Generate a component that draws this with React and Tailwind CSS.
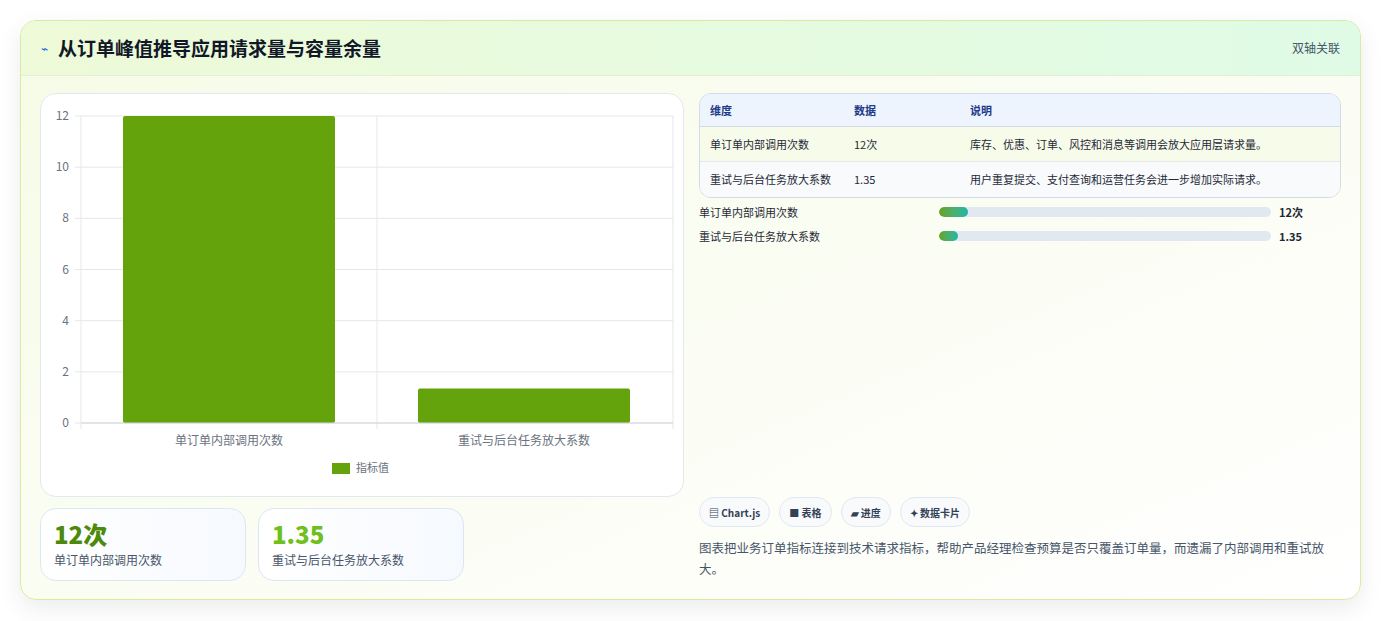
const F = { fontFamily: '"Noto Sans CJK SC", "Noto Sans", sans-serif' }

function Chart() {
  const top = 115, bottom = 422, left = 80, right = 672
  const y = v => bottom - (v / 12) * (bottom - top)
  return (
    <svg width="643" height="403" viewBox="40 93 643 403" className="block">
      {[0, 2, 4, 6, 8, 10, 12].map(v => (
        <g key={v}>
          <line x1={left - 6} x2={right} y1={y(v)} y2={y(v)} stroke="#e5e7eb" />
          <text x={68} y={y(v) + 4} textAnchor="end" fontSize="12" fill="#6b7280" style={F}>{v}</text>
        </g>
      ))}
      <line x1={left} x2={left} y1={top} y2={bottom + 6} stroke="#e5e7eb" />
      <line x1={376} x2={376} y1={top} y2={bottom + 6} stroke="#e5e7eb" />
      <line x1={672} x2={672} y1={top} y2={bottom + 6} stroke="#e5e7eb" />
      <rect x={122} y={y(12)} width={212} height={bottom - y(12)} rx="2" fill="#65a30d" />
      <rect x={417} y={y(1.35)} width={212} height={bottom - y(1.35)} rx="2" fill="#65a30d" />
      <line x1={left} x2={right} y1={bottom} y2={bottom} stroke="#d1d5db" />
      <text x={228} y={444} textAnchor="middle" fontSize="12" fill="#6b7280" style={F}>单订单内部调用次数</text>
      <text x={523} y={444} textAnchor="middle" fontSize="12" fill="#6b7280" style={F}>重试与后台任务放大系数</text>
      <rect x={331} y={462} width={18} height={11} fill="#65a30d" />
      <text x={355} y={471} fontSize="11" fill="#6b7280" style={F}>指标值</text>
    </svg>
  )
}

export default function App() {
  const rows = [
    ['单订单内部调用次数', '12次', '库存、优惠、订单、风控和消息等调用会放大应用层请求量。', 'bg-[#f7fbea]'],
    ['重试与后台任务放大系数', '1.35', '用户重复提交、支付查询和运营任务会进一步增加实际请求。', 'bg-[#f8fafc]'],
  ]
  const bars = [['单订单内部调用次数', '12次', 'w-[29px]'], ['重试与后台任务放大系数', '1.35', 'w-[19px]']]
  return (
    <div className="w-[1381px] h-[621px] bg-white pt-[20px] pl-[20px]" style={F}>
      <div className="w-[1341px] h-[580px] rounded-2xl border border-[#d6eda0] shadow-[0_8px_24px_rgba(0,0,0,0.08)] bg-gradient-to-br from-[#f6fbe6] to-white overflow-hidden">
        <div className="h-[55px] flex items-center justify-between px-[20px] bg-gradient-to-r from-[#eefad8] to-[#dffbe6] border-b border-[#e5efd6]">
          <div className="flex items-center gap-[10px]">
            <span className="text-[#2563eb] text-[12px]">⌁</span>
            <span className="text-[19px] font-bold text-[#111827]">从订单峰值推导应用请求量与容量余量</span>
          </div>
          <span className="text-[12px] text-[#475569]">双轴关联</span>
        </div>
        <div className="flex gap-[15px] px-[19px] pt-[17px]">
          <div className="w-[644px]">
            <div className="h-[404px] rounded-2xl border border-[#e2e8f0] bg-white overflow-hidden"><Chart /></div>
            <div className="flex gap-[12px] mt-[11px]">
              {[['12次', '单订单内部调用次数', 'text-[#4d8a0c]'], ['1.35', '重试与后台任务放大系数', 'text-[#6fc01a]']].map(([v, l, c]) => (
                <div key={l} className="w-[206px] h-[73px] rounded-2xl border border-[#dbe7f3] bg-gradient-to-r from-white to-[#f6f9fe] px-[13px] pt-[10px]">
                  <div className={`text-[24px] font-extrabold leading-[30px] ${c}`}>{v}</div>
                  <div className="text-[12px] text-[#475569] mt-[2px]">{l}</div>
                </div>
              ))}
            </div>
          </div>
          <div className="w-[644px] flex flex-col">
            <div className="rounded-xl border border-[#d4dbe6] overflow-hidden text-[11px]">
              <div className="h-[33px] flex items-center bg-[#edf4fd] border-b border-[#d4dbe6] font-semibold text-[#1e3a8a]">
                <span className="w-[154px] pl-[10px]">维度</span><span className="w-[116px]">数据</span><span>说明</span>
              </div>
              {rows.map(([a, b, c, bg], i) => (
                <div key={a} className={`h-[35px] flex items-center text-[#1f2937] ${bg} ${i === 0 ? 'border-b border-[#e5e7eb]' : ''}`}>
                  <span className="w-[154px] pl-[10px]">{a}</span><span className="w-[116px]">{b}</span><span>{c}</span>
                </div>
              ))}
            </div>
            <div className="mt-[6px] flex flex-col gap-[8px]">
              {bars.map(([l, v, w]) => (
                <div key={l} className="flex items-center h-[16px] text-[11px] text-[#1f2937]">
                  <span className="w-[240px]">{l}</span>
                  <div className="w-[332px] h-[10px] rounded-full bg-[#e2e8f0] overflow-hidden">
                    <div className={`h-full rounded-full bg-gradient-to-r from-[#65a30d] to-[#14b8a6] ${w}`} />
                  </div>
                  <span className="ml-[8px] font-bold">{v}</span>
                </div>
              ))}
            </div>
            <div className="mt-[253px] flex gap-[9px]">
              {['▤ Chart.js', '■ 表格', '▰ 进度', '✦ 数据卡片'].map(t => (
                <span key={t} className="h-[30px] px-[9px] flex items-center rounded-full border border-[#e2e8f0] bg-[#f8fafc] text-[10px] font-semibold text-[#334155]">{t}</span>
              ))}
            </div>
            <p className="mt-[10px] text-[12.5px] leading-[21px] text-[#475569] pr-[4px]">图表把业务订单指标连接到技术请求指标，帮助产品经理检查预算是否只覆盖订单量，而遗漏了内部调用和重试放大。</p>
          </div>
        </div>
      </div>
    </div>
  )
}
